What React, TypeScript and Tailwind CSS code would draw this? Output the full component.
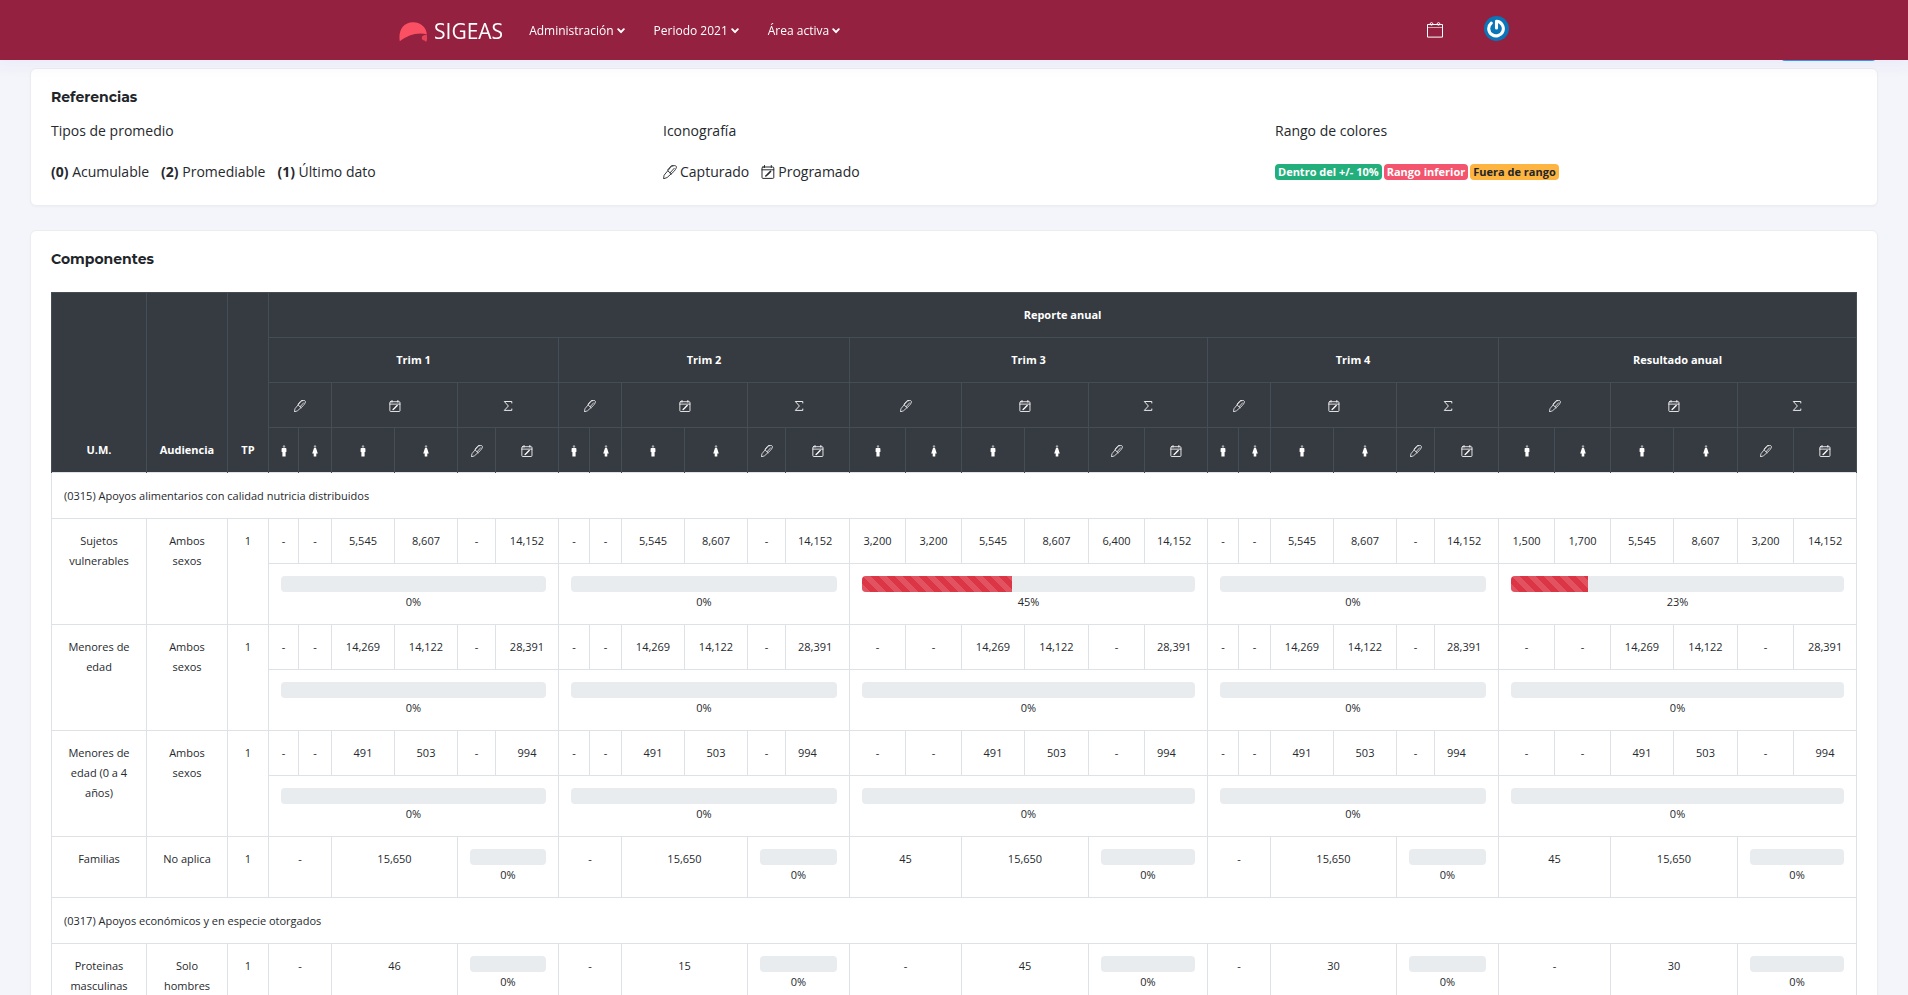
import React from "react";
import { Fragment } from "react";

/* ---------- icons ---------- */

function PenIcon({ className }: { className: string }) {
  return (
    <svg viewBox="0 0 14 14" className={className} fill="none" stroke="currentColor" strokeWidth="0.9" strokeLinecap="round" strokeLinejoin="round" aria-hidden="true">
      <path d="M0.6 13.4 1.1 10.2 7.4 2.6 C9 0.9 10.4 0.5 11.8 0.6 13.4 0.8 13.8 2 13.2 3.1 12.6 4.2 11.9 5.4 10.9 6.5 L4.400 12.300Z" />
      <path d="M4.900 5.900 8.300 9 M7 7.900 11.300 3.200 M4.800 4.700 8.400 0.700 10.200 0.700" />
    </svg>
  );
}

function PlanIcon({ className }: { className: string }) {
  return (
    <svg viewBox="0 0 14 14" className={className} fill="none" stroke="currentColor" strokeWidth="1" strokeLinecap="round" strokeLinejoin="round" aria-hidden="true">
      <rect x="1" y="2" width="11.8" height="11.4" rx="1" />
      <path d="M1 4.8h11.8M3.5 0.5v2M10.3 0.5v2" />
      <path d="M4.8 11 6.4 9.6 8.6 7.4" strokeWidth="1.6" />
      <path d="M9.2 6.8 9.6 6.4" strokeWidth="1.5" />
    </svg>
  );
}

function SigmaIcon({ className }: { className: string }) {
  return (
    <svg viewBox="0 0 10 12" className={className} fill="none" stroke="currentColor" strokeWidth="0.9" aria-hidden="true">
      <path d="M8.8 3.4V1.5H1.3L5.4 6 1.3 10.4H8.8V8.6" />
    </svg>
  );
}

function ManIcon() {
  return (
    <svg viewBox="0 0 6 12" className="inline-block h-3 w-1.5 align-middle" fill="currentColor" aria-hidden="true">
      <circle cx="3" cy="1.5" r="1.2" opacity="0.55" />
      <path d="M1.3 3h3.4c.4 0 .7.3.7.7v3.2H4.6V11.6H1.4V6.9H.6V3.7c0-.4.3-.7.7-.7Z" />
    </svg>
  );
}

function WomanIcon() {
  return (
    <svg viewBox="0 0 6 12" className="inline-block h-3 w-1.5 align-middle" fill="currentColor" aria-hidden="true">
      <circle cx="3" cy="1.5" r="1.2" opacity="0.55" />
      <path d="M2 3h2l1.8 5.4H4.3v3.2H1.7V8.4H.2Z" />
    </svg>
  );
}

function Chevron() {
  return (
    <svg viewBox="0 0 8 6" className="ml-[3px] h-1.5 w-2" fill="none" stroke="currentColor" strokeWidth="1.9" strokeLinecap="round" strokeLinejoin="round" aria-hidden="true">
      <path d="M1.2 1.2 4 4.2 6.8 1.2" />
    </svg>
  );
}

function Logo() {
  return (
    <svg viewBox="0 0 28 20" className="mt-0.5 h-5 w-7" aria-hidden="true">
      <path fill="#fb5064" d="M0.8 19.2C-1 9 4 0.3 14 0.3 22.5 0.3 27.5 6 27.8 12.3 18 10 9 13 0.8 19.2Z" />
      <circle cx="25.4" cy="15.800" r="2.600" fill="#e8415a" />
      <path fill="#e8415a" d="M25 13.200 27.900 12.600V17.500c0 1.700-.6 2.200-1 2.200-.6 0-.8-.9-1.400-1.400Z" />
    </svg>
  );
}

function CalendarIcon() {
  return (
    <svg viewBox="0 0 16 16" className="h-4 w-4" fill="none" stroke="currentColor" aria-hidden="true">
      <path d="M0.500 2.500h15v12.600H0.500Z" strokeWidth="1" />
      <path d="M1 5.500h14" strokeWidth="1" opacity="0.6" />
      <circle cx="4.500" cy="1.900" r="1.300" strokeWidth="0.9" />
      <circle cx="11.500" cy="1.900" r="1.300" strokeWidth="0.9" />
    </svg>
  );
}

function Avatar() {
  return (
    <svg viewBox="0 0 25 25" className="h-[25px] w-[25px]" fill="none" aria-hidden="true">
      <circle cx="12.500" cy="12.500" r="12.500" fill="#0a75b8" />
      <path d="M7.200 7.100A7.300 7.300 0 1 0 12.500 5.300V12" stroke="#fff" strokeWidth="3.100" strokeLinecap="round" strokeLinejoin="round" />
    </svg>
  );
}

/* ---------- data ---------- */

const periods = ["Trim 1", "Trim 2", "Trim 3", "Trim 4", "Resultado anual"];

const columnWidths = [
  "w-[95px]", "w-[81px]", "w-[41px]",
  "w-[30px]", "w-[33px]", "w-[63px]", "w-[63px]", "w-[38px]", "w-[63px]",
  "w-[31px]", "w-[32px]", "w-[63px]", "w-[63px]", "w-[38px]", "w-[64px]",
  "w-[56px]", "w-[56px]", "w-[63px]", "w-[64px]", "w-[56px]", "w-[63px]",
  "w-[31px]", "w-[32px]", "w-[63px]", "w-[63px]", "w-[38px]", "w-[64px]",
  "w-[56px]", "w-[56px]", "w-[63px]", "w-[64px]", "w-[56px]", "w-[63px]",
];

type Split = { unit: string; audience: string; kind: "split"; values: string[][]; progress: number[] };
type Single = { unit: string; audience: string; kind: "single"; values: string[][]; progress: number[] };
type Group = { title: string; rows: (Split | Single)[] };

const groups: Group[] = [
  {
    title: "(0315) Apoyos alimentarios con calidad nutricia distribuidos",
    rows: [
      {
        unit: "Sujetos vulnerables", audience: "Ambos sexos", kind: "split",
        values: [
          ["-", "-", "5,545", "8,607", "-", "14,152"],
          ["-", "-", "5,545", "8,607", "-", "14,152"],
          ["3,200", "3,200", "5,545", "8,607", "6,400", "14,152"],
          ["-", "-", "5,545", "8,607", "-", "14,152"],
          ["1,500", "1,700", "5,545", "8,607", "3,200", "14,152"],
        ],
        progress: [0, 0, 45, 0, 23],
      },
      {
        unit: "Menores de edad", audience: "Ambos sexos", kind: "split",
        values: Array(5).fill(["-", "-", "14,269", "14,122", "-", "28,391"]),
        progress: [0, 0, 0, 0, 0],
      },
      {
        unit: "Menores de edad (0 a 4 años)", audience: "Ambos sexos", kind: "split",
        values: Array(5).fill(["-", "-", "491", "503", "-", "994"]),
        progress: [0, 0, 0, 0, 0],
      },
      {
        unit: "Familias", audience: "No aplica", kind: "single",
        values: [["-", "15,650"], ["-", "15,650"], ["45", "15,650"], ["-", "15,650"], ["45", "15,650"]],
        progress: [0, 0, 0, 0, 0],
      },
    ],
  },
  {
    title: "(0317) Apoyos económicos y en especie otorgados",
    rows: [
      {
        unit: "Proteinas masculinas", audience: "Solo hombres", kind: "single",
        values: [["-", "46"], ["-", "15"], ["-", "45"], ["-", "30"], ["-", "30"]],
        progress: [0, 0, 0, 0, 0],
      },
    ],
  },
];

/* ---------- table parts ---------- */

const th = "border-x border-t border-[#454d55] px-1 py-3 text-center align-bottom font-bold";
const td = "border border-[#dee2e6] py-3 text-center align-top";

function Progress({ value }: { value: number }) {
  return (
    <>
      <div role="progressbar" aria-valuenow={value} aria-valuemin={0} aria-valuemax={100} className="h-4 overflow-hidden rounded bg-[#e9ecef]">
        <div
          className="h-full bg-[#dc3545] bg-[linear-gradient(45deg,rgba(255,255,255,.15)_25%,transparent_25%,transparent_50%,rgba(255,255,255,.15)_50%,rgba(255,255,255,.15)_75%,transparent_75%,transparent)] bg-[length:16px_16px]"
          style={{ width: `${value}%` }}
        />
      </div>
      <div>{value}%</div>
    </>
  );
}

function SplitRow({ row }: { row: Split }) {
  return (
    <>
      <tr>
        <td rowSpan={2} className={`${td} px-3`}>{row.unit}</td>
        <td rowSpan={2} className={`${td} px-3`}>{row.audience}</td>
        <td rowSpan={2} className={`${td} px-3`}>1</td>
        {row.values.map((cells, p) =>
          cells.map((value, i) => (
            <td key={`${p}-${i}`} className={i === 5 && p > 0 && p < 4 ? "border border-[#dee2e6] px-3 py-3 text-left align-top" : `${td} px-1`}>
              {value}
            </td>
          ))
        )}
      </tr>
      <tr>
        {row.progress.map((value, p) => (
          <td key={p} colSpan={6} className={`${td} px-3`}>
            <Progress value={value} />
          </td>
        ))}
      </tr>
    </>
  );
}

function SingleRow({ row }: { row: Single }) {
  return (
    <tr>
      <td className={`${td} px-3`}>{row.unit}</td>
      <td className={`${td} px-3`}>{row.audience}</td>
      <td className={`${td} px-3`}>1</td>
      {row.values.map(([captured, planned], p) => (
        <Fragment key={p}>
          <td colSpan={2} className={`${td} px-1`}>{captured}</td>
          <td colSpan={2} className={`${td} px-1`}>{planned}</td>
          <td colSpan={2} className={`${td} px-3`}>
            <Progress value={row.progress[p]} />
          </td>
        </Fragment>
      ))}
    </tr>
  );
}

function ReportTable() {
  const icon = "inline-block h-3 w-3 align-middle";
  return (
    <table className="w-full table-fixed border-collapse text-[11px] leading-5">
      <colgroup>
        {columnWidths.map((w, i) => (
          <col key={i} className={w} />
        ))}
      </colgroup>
      <thead className="bg-[#363a41] text-white">
        <tr>
          <th rowSpan={4} className={th}>U.M.</th>
          <th rowSpan={4} className={th}>Audiencia</th>
          <th rowSpan={4} className={th}>TP</th>
          <th colSpan={30} className={th}>Reporte anual</th>
        </tr>
        <tr>
          {periods.map((p) => (
            <th key={p} colSpan={6} className={th}>{p}</th>
          ))}
        </tr>
        <tr>
          {periods.map((p) => (
            <Fragment key={p}>
              <th colSpan={2} className={th}><PenIcon className={icon} /></th>
              <th colSpan={2} className={th}><PlanIcon className={icon} /></th>
              <th colSpan={2} className={th}><SigmaIcon className="inline-block h-3 w-2.5 align-middle" /></th>
            </Fragment>
          ))}
        </tr>
        <tr>
          {periods.map((p) => (
            <Fragment key={p}>
              <th className={th}><ManIcon /></th>
              <th className={th}><WomanIcon /></th>
              <th className={th}><ManIcon /></th>
              <th className={th}><WomanIcon /></th>
              <th className={th}><PenIcon className={icon} /></th>
              <th className={th}><PlanIcon className={icon} /></th>
            </Fragment>
          ))}
        </tr>
      </thead>
      <tbody>
        {groups.map((group) => (
          <Fragment key={group.title}>
            <tr>
              <td colSpan={33} className="border border-[#dee2e6] p-3 text-left leading-[21px]">{group.title}</td>
            </tr>
            {group.rows.map((row) =>
              row.kind === "split" ? <SplitRow key={row.unit} row={row} /> : <SingleRow key={row.unit} row={row} />
            )}
          </Fragment>
        ))}
      </tbody>
    </table>
  );
}

/* ---------- page ---------- */

const card = "rounded-md border border-[#ecedef] bg-white p-5 pt-[19px] shadow-[0_1px_2px_rgba(0,0,0,0.03)]";
const cardTitle = "font-['Montserrat','Open_Sans',sans-serif] text-sm leading-[18px] font-bold text-[#212529]";

export default function App() {
  return (
    <div className="min-h-screen bg-[#f4f5fa] font-['Open_Sans',sans-serif] text-sm leading-[25px] text-[#26292d]">
      <header className="fixed inset-x-0 top-0 z-10 bg-[#93213f] text-white shadow-[0_0_15px_5px_rgba(69,65,200,0.06)]">
        <div className="mx-auto flex h-[60px] max-w-[1140px] items-center px-[15px]">
          <a href="#inicio" className="flex items-center gap-[7px] pt-0.5 text-[21px] leading-6 font-normal">
            <Logo />
            SIGEAS
          </a>
          <nav className="ml-[26px] flex items-center gap-[29px] pt-0.5 text-xs">
            {["Administración", "Periodo 2021", "Área activa"].map((label) => (
              <button key={label} type="button" className="flex items-center">
                {label}
                <Chevron />
              </button>
            ))}
          </nav>
          <div className="ml-auto flex items-center gap-[41px]">
            <button type="button" aria-label="Calendario">
              <CalendarIcon />
            </button>
            <button type="button" aria-label="Usuario" className="pb-1">
              <Avatar />
            </button>
          </div>
        </div>
      </header>

      <main className="px-[30px] pt-[23px]">
        <div className="flex justify-end pr-0.5">
          <div className="h-[38px] w-[95px] rounded bg-[#2f9df5]" />
        </div>

        <section className={`mt-[7px] ${card}`}>
          <h2 className={cardTitle}>Referencias</h2>
          <div className="mt-3 grid grid-cols-3 gap-[30px]">
            <div>
              <p className="mb-4">Tipos de promedio</p>
              <p className="flex gap-3">
                <span><b>(0)</b> Acumulable</span>
                <span><b>(2)</b> Promediable</span>
                <span><b>(1)</b> Último dato</span>
              </p>
            </div>
            <div>
              <p className="mb-4">Iconografía</p>
              <p className="flex gap-3">
                <span className="flex items-center gap-[3px]"><PenIcon className="h-3.5 w-3.5" />Capturado</span>
                <span className="flex items-center gap-[3px]"><PlanIcon className="h-3.5 w-3.5" />Programado</span>
              </p>
            </div>
            <div>
              <p className="mb-4">Rango de colores</p>
              <p className="flex h-[26px] items-center gap-[2px] text-[11px] leading-4 font-bold text-white">
                <span className="rounded bg-[#23af7c] px-[3px]">Dentro del +/- 10%</span>
                <span className="rounded bg-[#f3546e] px-[3px]">Rango inferior</span>
                <span className="rounded bg-[#fdb441] px-[3px] text-[#212529]">Fuera de rango</span>
              </p>
            </div>
          </div>
        </section>

        <section className={`mt-6 ${card}`}>
          <h2 className={`mb-6 ${cardTitle}`}>Componentes</h2>
          <ReportTable />
        </section>
      </main>
    </div>
  );
}
